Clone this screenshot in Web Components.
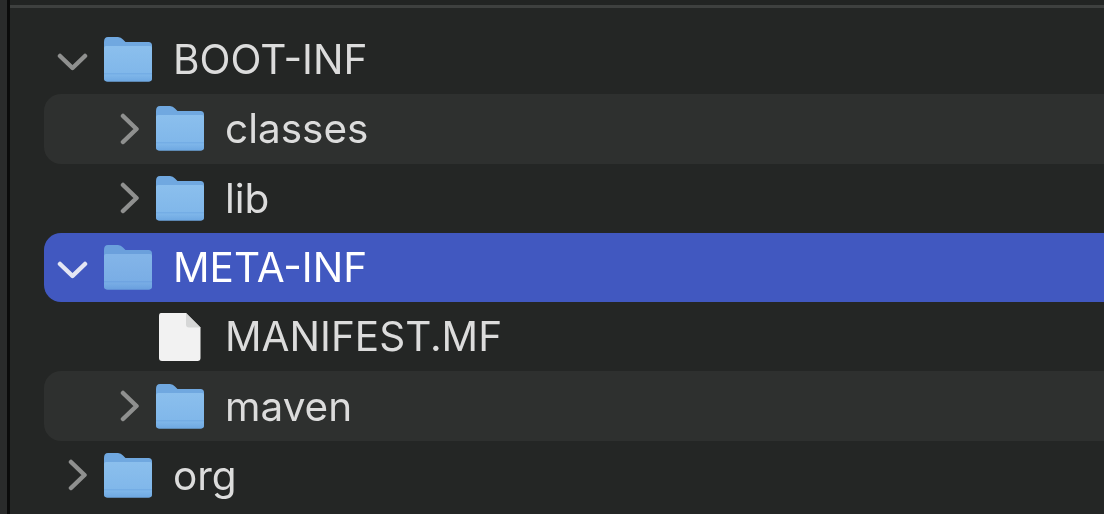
<!DOCTYPE html>
<html>
<head>
<meta charset="utf-8">
<style>
  html, body { margin: 0; height: 100%; background: #242625; overflow: hidden; }
</style>
</head>
<body>
<finder-window>
  <tree-row chevron="down" icon="folder">BOOT-INF</tree-row>
  <tree-row level="1" chevron="right" icon="folder" striped>classes</tree-row>
  <tree-row level="1" chevron="right" icon="folder">lib</tree-row>
  <tree-row chevron="down" icon="folder" selected>META-INF</tree-row>
  <tree-row level="1" icon="file">MANIFEST.MF</tree-row>
  <tree-row level="1" chevron="right" icon="folder" striped>maven</tree-row>
  <tree-row chevron="right" icon="folder">org</tree-row>
</finder-window>

<script>
class FinderWindow extends HTMLElement {
  constructor() {
    super();
    this.attachShadow({ mode: 'open' });
  }

  connectedCallback() {
    this.shadowRoot.innerHTML = `
      <style>
        :host { display: flex; width: 1104px; height: 514px; background: #242625; overflow: hidden; }
        .edge { flex: none; width: 7px; background: #2a2b2b; border-right: 3px solid #0b0b0b; }
        .pane { flex: 1; min-width: 0; display: flex; flex-direction: column; }
        .top { flex: none; height: 4.500px; background: #222423; border-bottom: 3px solid #3e403f; }
        .list { display: flex; flex-direction: column; padding: 17.500px 0 0 34px; }
      </style>
      <div class="edge"></div>
      <div class="pane">
        <div class="top"></div>
        <div class="list"><slot></slot></div>
      </div>
    `;
  }
}
customElements.define('finder-window', FinderWindow);

const ICONS = {
  folder: `
    <svg width="50" height="47" viewBox="0 0 50 47">
      <defs>
        <linearGradient id="body" x1="0" y1="0" x2="0" y2="1">
          <stop offset="0" stop-color="#8bbfed"/>
          <stop offset="0.8" stop-color="#80b7ea"/>
          <stop offset="1" stop-color="#6ea8e2"/>
        </linearGradient>
      </defs>
      <path d="M1 6 Q1 1 5 1 H15 Q18 1 20 3.500 L22.500 6 H45.500 Q49 6 49 9.500 V42 Q49 45.500 45.500 45.500 H4.500 Q1 45.500 1 42 Z" fill="#70a8e0"/>
      <path d="M1 12 Q1 10 3 10 H47 Q49 10 49 12 V42 Q49 45.500 45.500 45.500 H4.500 Q1 45.500 1 42 Z" fill="url(#body)"/>
      <rect x="1" y="37" width="48" height="1.500" fill="#74ade5"/>
    </svg>`,
  file: `
    <svg width="44" height="50" viewBox="0 0 44 50">
      <path d="M3 1 H28 L42.500 15.500 V46 Q42.500 49 39.500 49 H4 Q1 49 1 46 V4 Q1 1 3 1 Z" fill="#f2f2f2"/>
      <path d="M28 1 L42.500 15.500 H31 Q28 15.500 28 12.500 Z" fill="#d6d7d7"/>
    </svg>`
};

const CHEVRONS = {
  down: '<svg class="down" width="31" height="18" viewBox="0 0 31 18"><path d="M3 3 L15.500 15 L28 3"/></svg>',
  right: '<svg class="right" width="20" height="32" viewBox="0 0 20 32"><path d="M3 3 L16.500 16 L3 29"/></svg>'
};

class TreeRow extends HTMLElement {
  constructor() {
    super();
    this.attachShadow({ mode: 'open' });
  }

  connectedCallback() {
    const level = parseInt(this.getAttribute('level'), 10) || 0;
    const chevron = this.getAttribute('chevron');
    const icon = this.getAttribute('icon') || 'folder';

    this.shadowRoot.innerHTML = `
      <style>
        :host {
          display: flex; align-items: center; flex: none; height: 69.3px;
          padding-left: ${level * 52}px; border-radius: 17px 0 0 17px;
          color: #dcdcdc; font: 400 40.500px Inter, "Liberation Sans", sans-serif;
        }
        :host([striped]) { background: #2e302f; }
        :host([selected]) { background: #4158c0; color: #fff; }
        .chevron { flex: none; width: 58px; height: 34px; display: flex; align-items: center; justify-content: center; margin-right: 1px; }
        .chevron svg { fill: none; stroke: #8f908f; stroke-width: 4.500; stroke-linecap: round; stroke-linejoin: round; filter: blur(0.7px); }
        .chevron .down { transform: translate(-1px, 2px); }
        .chevron .right { transform: translate(5px, 0); }
        :host([selected]) .chevron svg { stroke: #e4e6f4; }
        .icon { flex: none; display: flex; width: 50px; justify-content: center; filter: blur(0.7px); }
        :host([selected]) .icon { opacity: 0.9; }
        .label { margin-left: 20px; white-space: nowrap; filter: blur(0.6px); }
      </style>
      <span class="chevron">${chevron ? CHEVRONS[chevron] : ''}</span>
      <span class="icon">${ICONS[icon]}</span>
      <span class="label"><slot></slot></span>
    `;
  }
}
customElements.define('tree-row', TreeRow);
</script>
</body>
</html>
